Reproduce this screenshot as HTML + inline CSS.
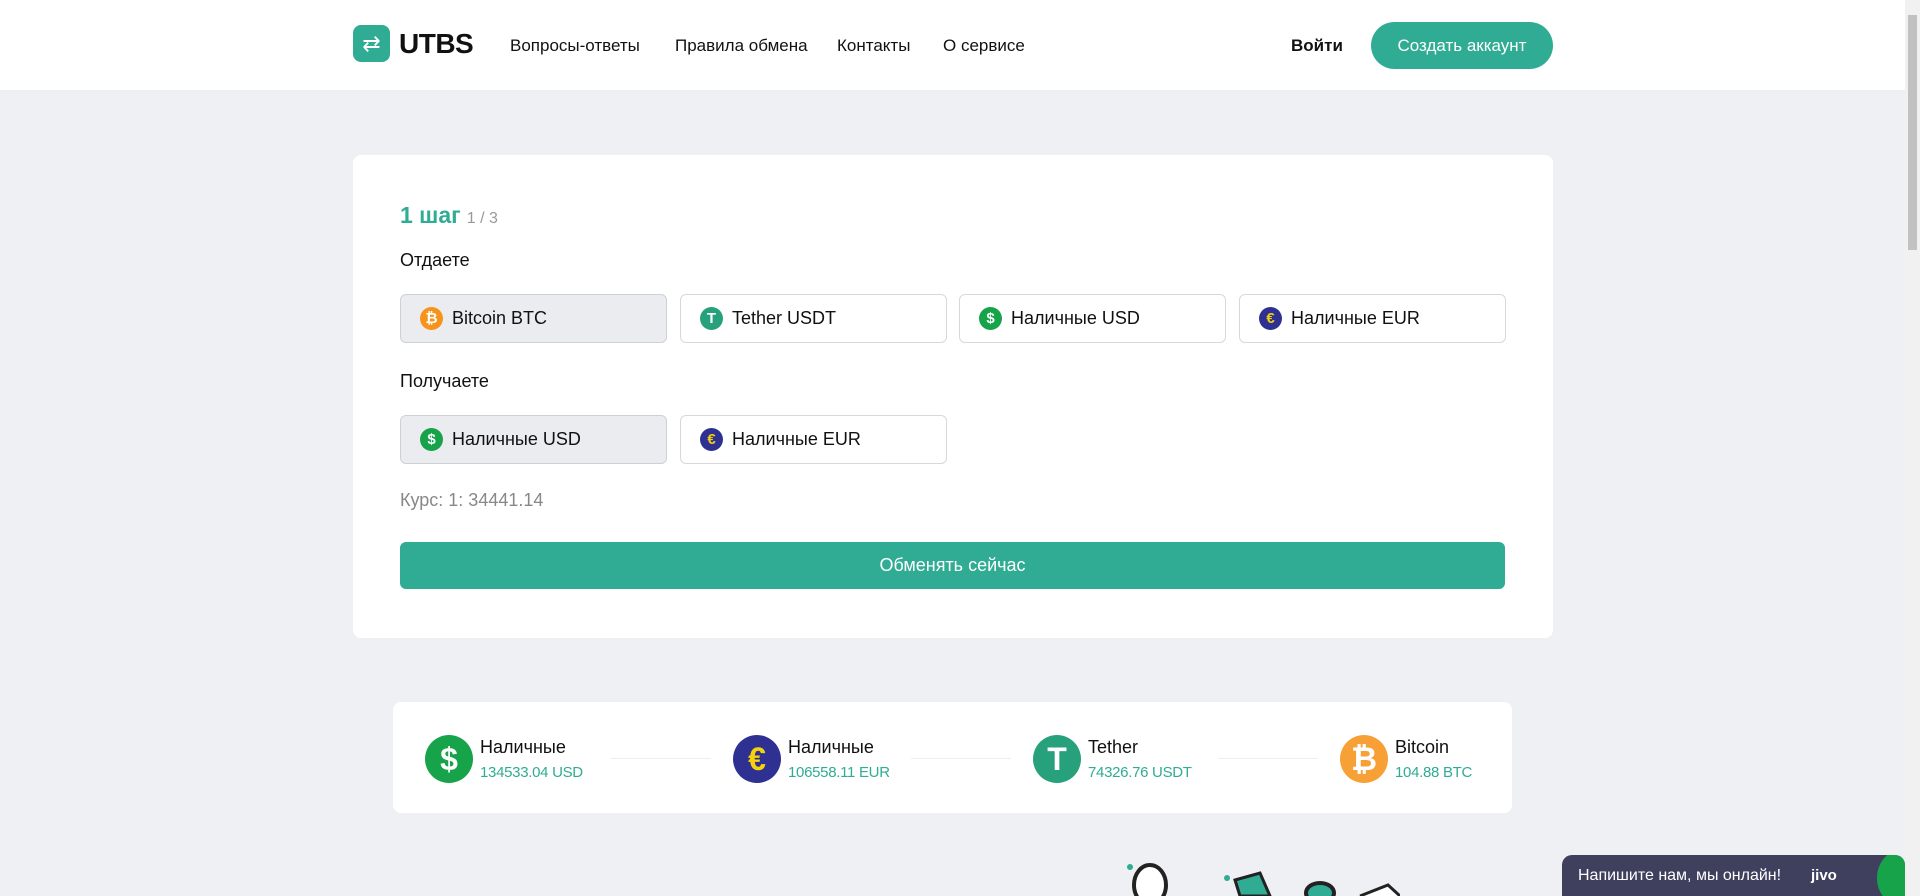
<!DOCTYPE html>
<html><head><meta charset="utf-8"><style>
*{box-sizing:border-box;margin:0;padding:0}
body{width:1920px;height:896px;overflow:hidden;background:#eff0f4;font-family:"Liberation Sans",sans-serif;color:#111;position:relative}
.hdr{position:absolute;left:0;top:0;width:1905px;height:90px;background:#fff}
.logo{position:absolute;left:353px;top:25px;width:37px;height:37px;border-radius:8px;background:#2fac93;color:#fff;font-size:22px;text-align:center;line-height:37px}
.brand{position:absolute;left:399px;top:28px;font-size:28px;font-weight:bold;letter-spacing:-0.5px}
.nav{position:absolute;top:36px;font-size:17px}
.login{position:absolute;left:1291px;top:36px;font-size:17px;font-weight:bold}
.cta{position:absolute;left:1371px;top:22px;width:182px;height:47px;border-radius:24px;background:#2fac93;color:#fff;font-size:17px;text-align:center;line-height:47px}
.card{position:absolute;left:353px;top:155px;width:1200px;height:483px;background:#fff;border-radius:8px}
.step{position:absolute;left:400px;top:202px;font-size:23px;font-weight:bold;color:#2fac93}
.step span{font-size:16px;color:#999;font-weight:normal;margin-left:6px}
.lbl{position:absolute;left:400px;font-size:18px}
.opt{position:absolute;width:267px;height:49px;border:1px solid #d8d8dc;border-radius:6px;background:#fff;font-size:18px;display:flex;align-items:center;padding-left:19px}
.opt.sel{background:#ebecf0;border-color:#cfd0d6}
.ic{width:23px;height:23px;border-radius:50%;color:#fff;font-size:15px;font-weight:bold;display:flex;align-items:center;justify-content:center;margin-right:9px}
.rate{position:absolute;left:400px;top:490px;font-size:18px;color:#888}
.go{position:absolute;left:400px;top:542px;width:1105px;height:47px;border-radius:6px;background:#2fac93;color:#fff;font-size:18px;text-align:center;line-height:47px}
.stats{position:absolute;left:393px;top:702px;width:1119px;height:111px;background:#fff;border-radius:8px}
.st{position:absolute;top:33px;display:flex}
.big{width:48px;height:48px;border-radius:50%;color:#fff;font-size:32px;font-weight:bold;display:flex;align-items:center;justify-content:center;margin-right:7px}
.st .n{font-size:18px;margin-top:2px}
.st .v{font-size:15px;color:#2fac93;margin-top:6px;letter-spacing:-0.3px}
.ln{position:absolute;top:56px;height:1px;background:#eee;width:100px}
.chat{position:absolute;left:1562px;top:855px;width:343px;height:41px;background:#3f405e;border-radius:10px 10px 0 0;color:#fff;font-size:16px;padding:12px 0 0 16px;overflow:hidden}
.chat b{position:absolute;left:249px;top:12px;font-size:15px}
.chat i{position:absolute;right:-20px;top:-5px;width:48px;height:56px;border-radius:50%;background:#16a34a}
.sb{position:absolute;left:1905px;top:0;width:15px;height:896px;background:#f1f1f1}
.sb div{position:absolute;left:3px;top:15px;width:9px;height:235px;background:#c1c1c1}
</style></head><body>
<div class="hdr"></div>
<div class="logo">⇄</div><div class="brand">UTBS</div>
<div class="nav" style="left:510px">Вопросы-ответы</div>
<div class="nav" style="left:675px">Правила обмена</div>
<div class="nav" style="left:837px">Контакты</div>
<div class="nav" style="left:943px">О сервисе</div>
<div class="login">Войти</div>
<div class="cta">Создать аккаунт</div>
<div class="card"></div>
<div class="step">1 шаг<span>1 / 3</span></div>
<div class="lbl" style="top:250px">Отдаете</div>
<div class="opt sel" style="left:400px;top:294px"><div class="ic" style="background:#f7931a">₿</div>Bitcoin BTC</div>
<div class="opt" style="left:680px;top:294px"><div class="ic" style="background:#26a17b">T</div>Tether USDT</div>
<div class="opt" style="left:959px;top:294px"><div class="ic" style="background:#16a34a">$</div>Наличные USD</div>
<div class="opt" style="left:1239px;top:294px"><div class="ic" style="background:#2e3192;color:#f5d20b">€</div>Наличные EUR</div>
<div class="lbl" style="top:371px">Получаете</div>
<div class="opt sel" style="left:400px;top:415px"><div class="ic" style="background:#16a34a">$</div>Наличные USD</div>
<div class="opt" style="left:680px;top:415px"><div class="ic" style="background:#2e3192;color:#f5d20b">€</div>Наличные EUR</div>
<div class="rate">Курс: 1: 34441.14</div>
<div class="go">Обменять сейчас</div>
<div class="stats">
<div class="st" style="left:32px"><div class="big" style="background:#16a34a">$</div><div><div class="n">Наличные</div><div class="v">134533.04 USD</div></div></div>
<div class="ln" style="left:218px"></div>
<div class="st" style="left:340px"><div class="big" style="background:#2e3192;color:#f5d20b">€</div><div><div class="n">Наличные</div><div class="v">106558.11 EUR</div></div></div>
<div class="ln" style="left:518px"></div>
<div class="st" style="left:640px"><div class="big" style="background:#26a17b">T</div><div><div class="n">Tether</div><div class="v">74326.76 USDT</div></div></div>
<div class="ln" style="left:825px"></div>
<div class="st" style="left:947px"><div class="big" style="background:#f7a035">₿</div><div><div class="n">Bitcoin</div><div class="v">104.88 BTC</div></div></div>
</div>
<svg style="position:absolute;left:1120px;top:845px" width="280" height="51">
<ellipse cx="30" cy="40" rx="16" ry="20" fill="#fff" stroke="#222" stroke-width="4"/>
<path d="M115 35 L140 28 L150 51 L120 51Z" fill="#2fac93" stroke="#222" stroke-width="3"/>
<ellipse cx="200" cy="48" rx="14" ry="10" fill="#2fac93" stroke="#222" stroke-width="4"/>
<path d="M240 51 L268 40 L280 51" fill="#fff" stroke="#222" stroke-width="3"/>
<circle cx="10" cy="22" r="3" fill="#2fac93"/><circle cx="107" cy="33" r="3" fill="#2fac93"/><circle cx="230" cy="56" r="3" fill="#2fac93"/>
</svg>
<div class="chat">Напишите нам, мы онлайн!<b>jivo</b><i></i></div>
<div class="sb"><div></div></div>
</body></html>
